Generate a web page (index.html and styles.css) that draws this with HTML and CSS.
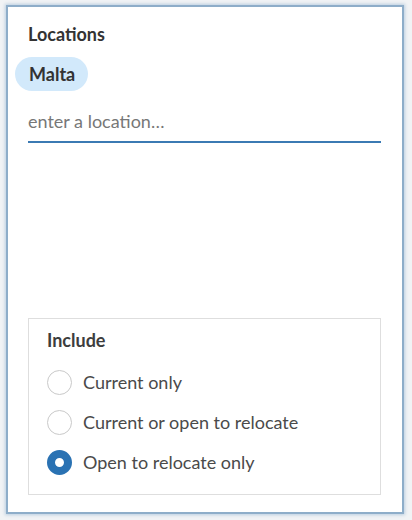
FILE: index.html
```html
<!DOCTYPE html>
<html>
<head>
<meta charset="utf-8">
<link rel="stylesheet" href="styles.css">
</head>
<body>
<div class="panel">
  <div class="title">Locations</div>
  <div class="pills"><span class="pill">Malta</span></div>
  <div class="input">enter a location…</div>
  <div class="include">
    <div class="include-title">Include</div>
    <div class="option"><span class="radio"></span><span class="label">Current only</span></div>
    <div class="option"><span class="radio"></span><span class="label">Current or open to relocate</span></div>
    <div class="option"><span class="radio checked"></span><span class="label">Open to relocate only</span></div>
  </div>
</div>
</body>
</html>
```
FILE: styles.css
```css
html, body {
  margin: 0;
  height: 100%;
}
body {
  background: #f1f3f5;
  padding: 5px 8px 6px 6px;
  box-sizing: border-box;
  font-family: Lato, "Open Sans", sans-serif;
  font-size: 18px;
  color: #4a4a4a;
}
.panel {
  height: 509px;
  width: 398px;
  box-sizing: border-box;
  background: #fff;
  border: 2px solid #8eadc9;
  box-shadow: 0 0 3px 1px rgba(120, 160, 200, 0.45);
  padding: 17px 21px 17px 20px;
  display: flex;
  flex-direction: column;
}
.title {
  font-weight: 700;
  color: #333;
  line-height: 20px;
}
.pills {
  margin-top: 13px;
  display: flex;
}
.pill {
  margin-left: -13px;
  padding: 0 13px 0 14px;
  height: 34px;
  line-height: 34px;
  border-radius: 17px;
  background: #d2e9fb;
  color: #333;
  font-weight: 700;
}
.input {
  margin-top: 10px;
  height: 40px;
  line-height: 40px;
  border-bottom: 2px solid #3b7ab3;
  color: #777;
}
.include {
  margin-top: auto;
  border: 1px solid #dedede;
  padding: 11px 18px 12px 18px;
}
.include-title {
  font-weight: 700;
  color: #3d3d3d;
  line-height: 20px;
  margin-bottom: 12px;
}
.option {
  display: flex;
  align-items: center;
  height: 40px;
}
.radio {
  width: 25px;
  height: 25px;
  box-sizing: border-box;
  border: 1.5px solid #c9c9c9;
  border-radius: 50%;
  margin-right: 11px;
  flex: none;
}
.radio.checked {
  border: 8.5px solid #2a72b3;
  background: #fff;
}
.label {
  color: #4a4a4a;
}
```
